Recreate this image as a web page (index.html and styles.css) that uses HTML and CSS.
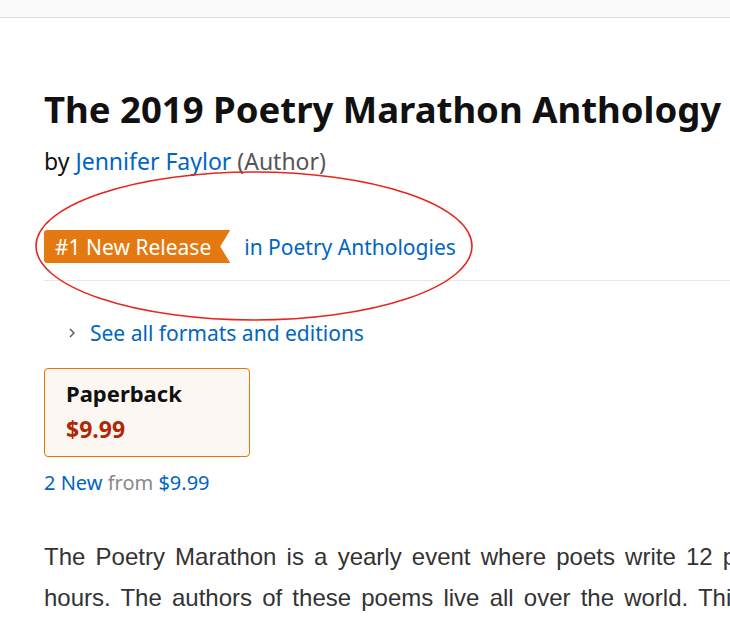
FILE: index.html
```html
<!DOCTYPE html>
<html lang="en">
<head>
<meta charset="utf-8">
<title>The 2019 Poetry Marathon Anthology</title>
<link rel="stylesheet" href="styles.css">
</head>
<body>
<div class="topbar"></div>
<main class="page">
  <h1 class="title">The 2019 Poetry Marathon Anthology</h1>
  <div class="byline">by <a class="link" href="#">Jennifer Faylor</a> <span class="role">(Author)</span></div>
  <div class="rank">
    <span class="badge">#1 New Release</span>
    <a class="link rank-cat" href="#">in Poetry Anthologies</a>
    <svg class="annot" width="444" height="156" viewBox="0 0 444 156" aria-hidden="true">
      <ellipse cx="222" cy="78" rx="218" ry="74" fill="none" stroke="#e8251c" stroke-width="1.6"/>
    </svg>
  </div>
  <hr class="divider">
  <div class="formats">
    <svg class="chev" width="8" height="12" viewBox="0 0 8 12" aria-hidden="true"><path d="M2 2l4 4-4 4" fill="none" stroke="#555" stroke-width="1.4"/></svg>
    <a class="link" href="#">See all formats and editions</a>
  </div>
  <div class="format-card">
    <div class="fmt-name">Paperback</div>
    <div class="fmt-price">$9.99</div>
  </div>
  <div class="offers"><a class="link" href="#">2 New</a> <span class="from">from</span> <a class="link" href="#">$9.99</a></div>
  <div class="desc">
    <p class="desc-line">The Poetry Marathon is a yearly event where poets write 12 poems in 12 hours, or 24 poems in 24</p>
    <p class="desc-line">hours. The authors of these poems live all over the world. This anthology collects their work.</p>
  </div>
</main>
</body>
</html>
```
FILE: styles.css
```css
html, body {
  margin: 0;
  padding: 0;
  background: #fff;
  overflow: hidden;
}
body {
  width: 730px;
  height: 622px;
  font-family: "Noto Sans", "Open Sans", sans-serif;
  color: #111;
}
.topbar {
  height: 17px;
  background: #fafafa;
  border-bottom: 1px solid #dcdcdc;
}
.page {
  padding: 0 0 0 44px;
  overflow: hidden;
}
.link {
  color: #0066c0;
  text-decoration: none;
}
.title {
  margin: 0;
  padding-top: 66px;
  font-size: 36.5px;
  line-height: 50px;
  font-weight: 700;
  white-space: nowrap;
  color: #111;
}
.byline {
  margin-top: 13px;
  font-size: 23px;
  line-height: 28px;
}
.role {
  color: #555;
}
.rank {
  position: relative;
  margin-top: 55px;
  display: flex;
  align-items: center;
  gap: 14px;
  height: 33px;
}
.badge {
  display: inline-flex;
  align-items: center;
  height: 33px;
  padding: 0 19px 0 11px;
  background: #e47911;
  color: #fff;
  font-size: 21px;
  border-radius: 3px 0 0 3px;
  clip-path: polygon(0 0, 100% 0, calc(100% - 10px) 50%, 100% 100%, 0 100%);
}
.rank-cat {
  font-size: 21px;
}
.annot {
  position: absolute;
  left: -12px;
  top: -62px;
  pointer-events: none;
}
.divider {
  margin: 17px 0 0 0;
  border: 0;
  border-top: 1px solid #e7e7e7;
  height: 0;
}
.formats {
  display: flex;
  align-items: center;
  gap: 14px;
  margin-top: 39px;
  padding-left: 24px;
  font-size: 21px;
  line-height: 26px;
}
.format-card {
  box-sizing: border-box;
  width: 206px;
  height: 89px;
  margin-top: 22px;
  padding: 8px 21px 0;
  background: #fcf7f2;
  border: 1px solid #e77600;
  border-radius: 4px;
}
.fmt-name {
  font-size: 22px;
  font-weight: 700;
  line-height: 33px;
  color: #111;
}
.fmt-price {
  font-size: 23px;
  font-weight: 700;
  line-height: 38px;
  color: #b12704;
}
.offers {
  margin-top: 13px;
  font-size: 20px;
  line-height: 26px;
}
.from {
  color: #888;
}
.desc {
  margin-top: 40px;
  font-family: "Liberation Sans", Arial, sans-serif;
  font-size: 24px;
  line-height: 41px;
  word-spacing: 3.5px;
  color: #333;
  overflow: hidden;
}
.desc-line {
  margin: 0;
  white-space: nowrap;
}
```
